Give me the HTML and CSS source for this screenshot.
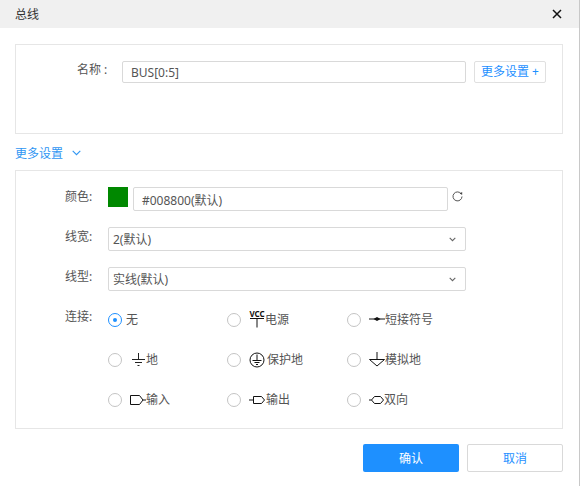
FILE: index.html
```html
<!DOCTYPE html>
<html lang="zh-CN">
<head>
    <meta charset="UTF-8">
    <title>总线</title>
    <link rel="stylesheet" href="styles.css">
</head>
<body>
    <div class="dialog">
        <div class="dialog-header">
            <span>总线</span>
            <svg class="close-icon" width="10" height="10" viewBox="0 0 10 10"><path d="M1 1L9 9M9 1L1 9" stroke="#111" stroke-width="1.5" fill="none"/></svg>
        </div>

        <div class="card card-name">
            <div class="name-label">名称 :</div>
            <div class="field name-input">BUS[0:5]</div>
            <div class="more-button">更多设置 +</div>
        </div>

        <div class="more-toggle">
            <span>更多设置</span>
            <svg width="9" height="6" viewBox="0 0 9 6"><path d="M0.7 0.8L4.5 4.6L8.3 0.8" stroke="#2f96f3" stroke-width="1.1" fill="none"/></svg>
        </div>

        <div class="card card-more">
            <div class="form-row">
                <div class="row-label">颜色:</div>
                <div class="swatch"></div>
                <div class="field color-input">#008800(默认)</div>
                <svg class="reload-icon" width="11" height="11" viewBox="0 0 11 11"><path d="M9.3 3A4.5 4.5 0 1 0 10 5.5" stroke="#555" stroke-width="1" fill="none"/><path d="M7.6 2.4L10.2 1V3.7Z" fill="#444"/></svg>
            </div>
            <div class="form-row">
                <div class="row-label">线宽:</div>
                <div class="field select">
                    <span>2(默认)</span>
                    <svg width="7" height="5" viewBox="0 0 7 5"><path d="M0.7 0.9L3.5 3.7L6.3 0.9" stroke="#666" stroke-width="1.1" fill="none"/></svg>
                </div>
            </div>
            <div class="form-row">
                <div class="row-label">线型:</div>
                <div class="field select">
                    <span>实线(默认)</span>
                    <svg width="7" height="5" viewBox="0 0 7 5"><path d="M0.7 0.9L3.5 3.7L6.3 0.9" stroke="#666" stroke-width="1.1" fill="none"/></svg>
                </div>
            </div>
            <div class="form-row connect-row">
                <div class="row-label">连接:</div>
                <div class="radio-grid">
                    <div class="radio-item"><span class="radio checked"></span><span>无</span></div>
                    <div class="radio-item">
                        <span class="radio"></span>
                        <svg class="vcc" width="16" height="16" viewBox="0 0 16 16"><text x="8" y="5" text-anchor="middle" class="vcc-text">VCC</text><path d="M1 6.500H15M8 6.500V15.500" stroke="#111" fill="none"/></svg>
                        <span>电源</span>
                    </div>
                    <div class="radio-item">
                        <span class="radio"></span>
                        <svg class="short" width="16" height="6" viewBox="0 0 16 6"><path d="M0 3H16" stroke="#111"/><path d="M4.500 3L8 1L11.500 3L8 5Z" fill="#111"/></svg>
                        <span>短接符号</span>
                    </div>
                    <div class="radio-item">
                        <span class="radio"></span>
                        <svg class="gnd" width="15" height="14" viewBox="0 0 15 14"><path d="M7.500 0V6M1 6.500H14M4 9.500H11M6.500 12.500H8.500" stroke="#222" fill="none"/></svg>
                        <span>地</span>
                    </div>
                    <div class="radio-item">
                        <span class="radio"></span>
                        <svg class="earth" width="16" height="16" viewBox="0 0 16 16"><circle cx="8" cy="8" r="7" stroke="#111" fill="none"/><path d="M8 2.500V8M3.500 8.500H12.500M5.500 10.500H10.500M7 12.500H9" stroke="#111" fill="none"/></svg>
                        <span>保护地</span>
                    </div>
                    <div class="radio-item">
                        <span class="radio"></span>
                        <svg class="analog" width="16" height="15" viewBox="0 0 16 15"><path d="M8 0V7M0.500 7.500H15.500L8 14Z" stroke="#111" fill="none"/></svg>
                        <span>模拟地</span>
                    </div>
                    <div class="radio-item">
                        <span class="radio"></span>
                        <svg class="port-in" width="16" height="10" viewBox="0 0 16 10"><path d="M0.500 0.500H9.500L13 5L9.500 9.500H0.500ZM13 5H16" stroke="#111" fill="none"/></svg>
                        <span>输入</span>
                    </div>
                    <div class="radio-item">
                        <span class="radio"></span>
                        <svg class="port-out" width="16" height="8" viewBox="0 0 16 8"><path d="M0 4H4M4.500 0.500H12.500L15.500 4L12.500 7.500H4.500Z" stroke="#111" fill="none"/></svg>
                        <span>输出</span>
                    </div>
                    <div class="radio-item">
                        <span class="radio"></span>
                        <svg class="port-both" width="15" height="8" viewBox="0 0 15 8"><path d="M0 4H2.500M2.500 4L5.500 0.500H11.500L14.500 4L11.500 7.500H5.500Z" stroke="#111" fill="none"/></svg>
                        <span>双向</span>
                    </div>
                </div>
            </div>
        </div>

        <div class="dialog-footer">
            <div class="btn btn-primary">确认</div>
            <div class="btn btn-cancel">取消</div>
        </div>
    </div>
</body>
</html>
```

FILE: styles.css
```css
* {
    margin: 0;
    padding: 0;
    box-sizing: border-box;
}

body {
    font-family: "Noto Sans", "Noto Sans CJK SC", sans-serif;
    font-size: 12px;
    color: #555;
    background: white;
}

.dialog {
    width: 580px;
    height: 486px;
    border-right: 1px solid #c8c8c8;
    overflow: hidden;
}

.dialog-header {
    height: 28px;
    background: #f0f0f0;
    padding: 0 17px 0 15px;
    display: flex;
    justify-content: space-between;
    align-items: center;
    color: #333;
}

.card {
    width: 548px;
    margin-left: 15px;
    border: 1px solid #e6e6e6;
}

.card-name {
    height: 90px;
    margin-top: 16px;
    padding: 16px 16px 0 61px;
    display: flex;
    align-items: flex-start;
}

.name-label {
    width: 45px;
    line-height: 18px;
}

.field {
    height: 22px;
    border: 1px solid #d9d9d9;
    border-radius: 2px;
    line-height: 20px;
    background: white;
}

.name-input {
    width: 344px;
    padding-left: 8px;
    line-height: 22px;
}

.more-button {
    width: 72px;
    height: 22px;
    margin-left: 8px;
    border: 1px solid #e0e0e0;
    border-radius: 2px;
    color: #1e90ff;
    line-height: 20px;
    text-align: center;
}

.more-toggle {
    height: 36px;
    margin-left: 15px;
    padding-top: 1px;
    display: flex;
    align-items: center;
    gap: 9px;
    color: #2f96f3;
}

.card-more {
    height: 259px;
    padding: 16px 0 0 49px;
}

.form-row {
    display: flex;
    align-items: flex-start;
    height: 40px;
}

.row-label {
    width: 43px;
    line-height: 20px;
}

.swatch {
    width: 20px;
    height: 20px;
    background: #008800;
}

.color-input {
    width: 315px;
    height: 24px;
    margin-left: 5px;
    padding-left: 8px;
    line-height: 25px;
}

.reload-icon {
    margin: 4px 0 0 4px;
}

.select {
    width: 358px;
    height: 24px;
    padding: 1px 9px 0 4px;
    display: flex;
    justify-content: space-between;
    align-items: center;
}

.connect-row {
    height: auto;
}

.radio-grid {
    display: grid;
    grid-template-columns: 119px 120px 120px;
    grid-auto-rows: 40px;
    margin-top: 1px;
}

.radio-item {
    height: 24px;
    display: flex;
    align-items: center;
}

.radio {
    width: 14px;
    height: 14px;
    border: 1px solid #c4c4c4;
    border-radius: 50%;
    flex: none;
    margin-right: 8px;
}

.radio.checked {
    margin-right: 4px;
    border-color: #1e90ff;
    position: relative;
}

.radio.checked::after {
    content: "";
    position: absolute;
    left: 4px;
    top: 4px;
    width: 4px;
    height: 4px;
    border-radius: 50%;
    background: #1e90ff;
}

.vcc {
    overflow: visible;
}

.vcc-text {
    font-size: 8px;
    font-weight: 700;
    fill: #111;
}

.radio-item svg {
    flex: none;
}

.analog {
    margin-top: -2px;
}

.short {
    margin-top: -3px;
}

.gnd {
    margin-left: 1px;
}

.earth {
    margin-right: 2px;
}

.port-out {
    margin-top: -1px;
    margin-right: 1px;
}

.port-both {
    margin-top: -1px;
}

.radio-item span:last-child {
    margin-top: -2px;
}

.dialog-footer {
    margin: 15px 0 0 363px;
    display: flex;
    gap: 8px;
}

.btn {
    width: 96px;
    height: 28px;
    border-radius: 2px;
    line-height: 30px;
    text-align: center;
}

.btn-primary {
    background: #1e90ff;
    color: white;
}

.btn-cancel {
    border: 1px solid #d9d9d9;
    line-height: 28px;
    color: #1e90ff;
}
```
